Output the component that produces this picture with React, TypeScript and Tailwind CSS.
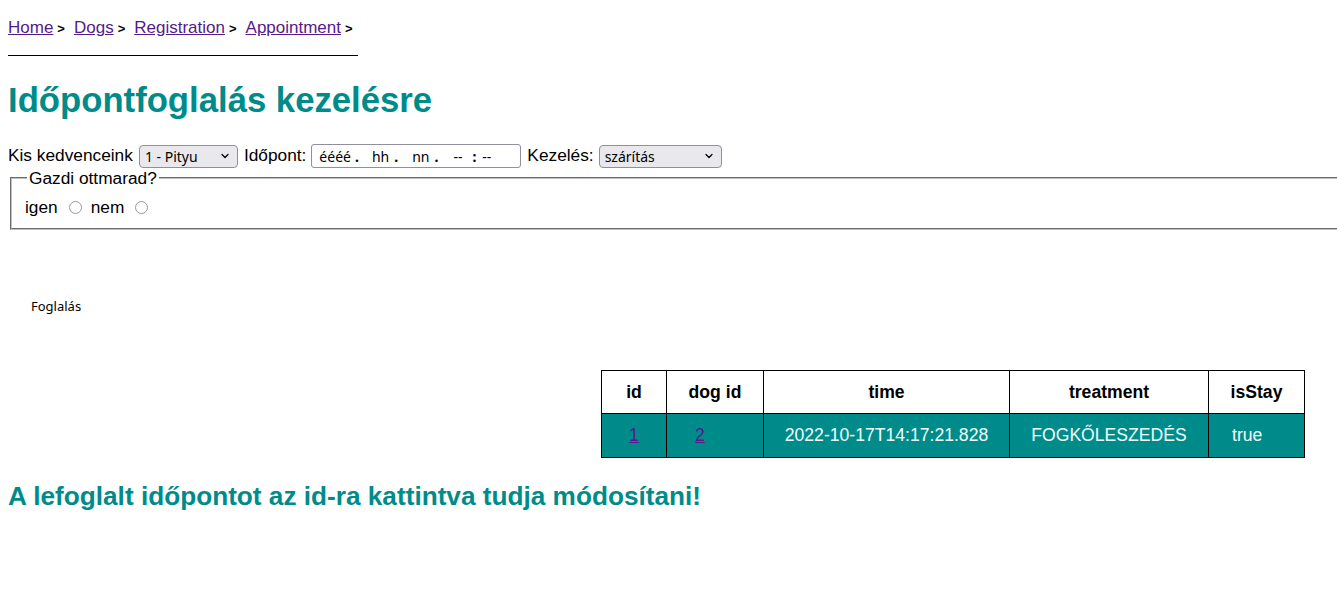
import { ChevronDown } from "lucide-react";

const crumbs = ["Home", "Dogs", "Registration", "Appointment"];

function FakeSelect({ value, width }: { value: string; width: string }) {
  return (
    <div
      className={`${width} h-[23px] flex items-center justify-between rounded-[4px] border border-[#8f8f9d] bg-[#e9e9ed] pl-[5px] pr-[6px] text-[14px] font-['Noto_Sans',sans-serif] text-black`}
    >
      <span>{value}</span>
      <ChevronDown size={12} strokeWidth={2.5} />
    </div>
  );
}

export default function App() {
  return (
    <div className="min-h-[589px] bg-white px-2 font-['Liberation_Sans',Arial,sans-serif] text-[17.6px] text-black overflow-hidden">
      {/* breadcrumbs */}
      <nav className="mt-[18px] w-[350px] border-b border-black pb-[16px] leading-[20px] text-[17px] flex items-baseline">
        {crumbs.map((c, i) => (
          <span key={c} className="flex items-baseline">
            <a href="#" className={`text-[#551a8b] underline ${i > 0 ? "ml-[9px]" : ""}`}>
              {c}
            </a>
            <b className="ml-[4px] text-[13px]">&gt;</b>
          </span>
        ))}
      </nav>

      <h1 className="mt-[24px] text-[34.7px] leading-[40px] font-bold text-[#008b8b]">
        Időpontfoglalás kezelésre
      </h1>

      {/* form row */}
      <div className="mt-[24px] flex items-center h-[24px] text-[17.3px]">
        <span>Kis kedvenceink</span>
        <div className="ml-[6px]">
          <FakeSelect value="1 - Pityu" width="w-[99px]" />
        </div>
        <span className="ml-[6px]">Időpont:</span>
        <div className="ml-[5px] w-[210px] h-[24px] flex items-center rounded-[3px] border border-[#8f8f9d] bg-white pl-[7px] text-[14px] font-['Noto_Sans',sans-serif]">
          <span>éééé</span>
          <span className="ml-[4px] font-bold">.</span>
          <span className="ml-[13px]">hh</span>
          <span className="ml-[5px] font-bold">.</span>
          <span className="ml-[14px]">nn</span>
          <span className="ml-[5px] font-bold">.</span>
          <span className="ml-[15px]">--</span>
          <span className="ml-[10px] font-bold">:</span>
          <span className="ml-[6px]">--</span>
        </div>
        <span className="ml-[6px]">Kezelés:</span>
        <div className="ml-[5px]">
          <FakeSelect value="szárítás" width="w-[123px]" />
        </div>
      </div>

      {/* fieldset */}
      <fieldset className="ml-[2px] w-[1340px] border-2 [border-style:groove] border-[#c0c0c0] px-[13px] pt-[9px] pb-[11px] text-[17.3px]">
        <legend className="ml-[2px] px-[2px] leading-[20px]">Gazdi ottmarad?</legend>
        <div className="flex items-center leading-[20px]">
          <span>igen</span>
          <span className="ml-[11px] w-[13px] h-[13px] rounded-full border-[1.5px] border-[#999]" />
          <span className="ml-[9px]">nem</span>
          <span className="ml-[11px] w-[13px] h-[13px] rounded-full border-[1.5px] border-[#999]" />
        </div>
      </fieldset>

      <button className="mt-[68px] ml-[23px] block text-[13px] leading-[16px] font-['Noto_Sans',sans-serif] bg-transparent border-0 p-0">
        Foglalás
      </button>

      {/* table */}
      <table className="mt-[56px] ml-[593px] border-collapse">
        <thead>
          <tr className="h-[43px] bg-white">
            <th className="w-[65px] border border-black font-bold">id</th>
            <th className="w-[97px] border border-black font-bold">dog id</th>
            <th className="w-[246px] border border-black font-bold">time</th>
            <th className="w-[199px] border border-black font-bold">treatment</th>
            <th className="w-[96px] border border-black font-bold">isStay</th>
          </tr>
        </thead>
        <tbody>
          <tr className="h-[44px] bg-[#008b8b] text-[#f0ffff]">
            <td className="border border-black text-center">
              <a href="#" className="text-[#551a8b] underline">1</a>
            </td>
            <td className="border border-black text-left pl-[28px]">
              <a href="#" className="text-[#551a8b] underline">2</a>
            </td>
            <td className="border border-black text-center">2022-10-17T14:17:21.828</td>
            <td className="border border-black text-center">FOGKŐLESZEDÉS</td>
            <td className="border border-black text-left pl-[23px]">true</td>
          </tr>
        </tbody>
      </table>

      <h2 className="mt-[23px] text-[26.2px] leading-[30px] font-bold text-[#008b8b]">
        A lefoglalt időpontot az id-ra kattintva tudja módosítani!
      </h2>
    </div>
  );
}
